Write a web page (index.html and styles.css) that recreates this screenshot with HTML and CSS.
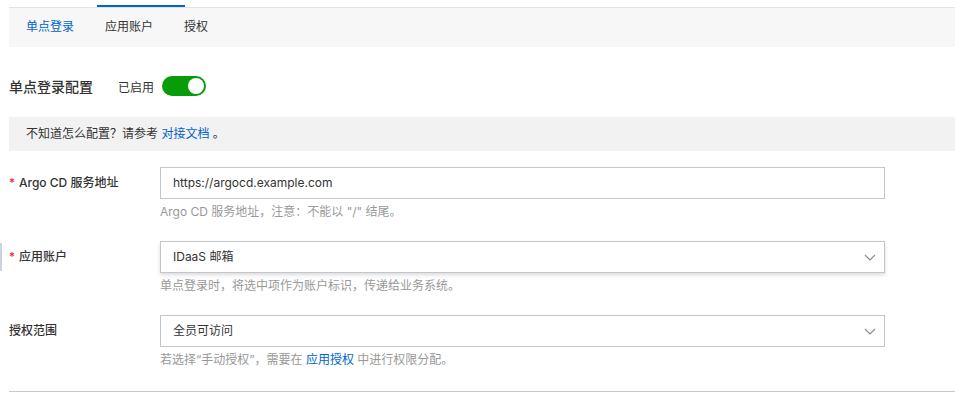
FILE: index.html
```html
<!DOCTYPE html>
<html lang="zh-CN">
<head>
<meta charset="utf-8">
<title>单点登录</title>
<link rel="stylesheet" href="styles.css">
</head>
<body>
<div class="page">
  <div class="tabs">
    <span class="tab-indicator"></span>
    <div class="tab active">单点登录</div>
    <div class="tab">应用账户</div>
    <div class="tab">授权</div>
  </div>

  <div class="header">
    <h2 class="title">单点登录配置</h2>
    <span class="status">已启用</span>
    <span class="switch"><span class="knob"></span></span>
  </div>

  <div class="notice">不知道怎么配置？请参考 <a class="link" href="#">对接文档</a> 。</div>

  <div class="form">
    <div class="row">
      <div class="label"><span class="req">*</span>Argo CD 服务地址</div>
      <div class="control">
        <div class="input">https://argocd.example.com</div>
        <div class="help">Argo CD 服务地址，注意：不能以 "/" 结尾。</div>
      </div>
    </div>
    <div class="row row-marked">
      <div class="label"><span class="req">*</span>应用账户</div>
      <div class="control">
        <div class="input select hover">IDaaS 邮箱
          <svg class="chev" width="12" height="7" viewBox="0 0 12 7"><path d="M1 1 L6 6 L11 1" fill="none" stroke="#8a8a8a" stroke-width="1.2"/></svg>
        </div>
        <div class="help">单点登录时，将选中项作为账户标识，传递给业务系统。</div>
      </div>
    </div>
    <div class="row">
      <div class="label">授权范围</div>
      <div class="control">
        <div class="input select">全员可访问
          <svg class="chev" width="12" height="7" viewBox="0 0 12 7"><path d="M1 1 L6 6 L11 1" fill="none" stroke="#8a8a8a" stroke-width="1.2"/></svg>
        </div>
        <div class="help">若选择“手动授权”，需要在 <a class="link" href="#">应用授权</a> 中进行权限分配。</div>
      </div>
    </div>
  </div>
  <div class="divider"></div>
</div>
</body>
</html>
```

FILE: styles.css
```css
* { box-sizing: border-box; }
html, body { margin: 0; padding: 0; background: #fff; }
body {
  font-family: Inter, "Noto Sans CJK SC", sans-serif;
  font-size: 12px;
  color: #333;
}
.page {
  padding: 7px 0 0 9px;
}
.tabs {
  position: relative;
  display: flex;
  height: 40px;
  border-top: 1px solid #e3e3e3;
  background: #f7f7f7;
  padding-left: 17px;
}
.tab-indicator {
  position: absolute;
  top: -3px;
  left: 88px;
  width: 88px;
  height: 2px;
  background: #0064c8;
}
.tab {
  line-height: 38px;
  margin-right: 31px;
  color: #333;
}
.tab.active { color: #0064c8; }

.header {
  display: flex;
  align-items: center;
  height: 20px;
  margin-top: 29px;
  margin-bottom: 21px;
}
.title {
  margin: 0;
  font-size: 14px;
  font-weight: 500;
  color: #333;
  margin-right: 25px;
}
.status { color: #333; margin-right: 8px; }
.switch {
  display: flex;
  align-items: center;
  justify-content: flex-end;
  width: 44px;
  height: 20px;
  border-radius: 10px;
  background: #089c08;
  padding-right: 2px;
}
.knob {
  width: 16px;
  height: 16px;
  border-radius: 50%;
  background: #fff;
}

.notice {
  height: 34px;
  line-height: 34px;
  background: #f2f2f2;
  padding-left: 17px;
  color: #333;
}
.link { color: #0064c8; text-decoration: none; }

.form { margin-top: 16px; }
.row {
  display: flex;
  margin-bottom: 20px;
  position: relative;
}
.row:last-child { margin-bottom: 0; }
.row-marked::before {
  content: "";
  position: absolute;
  left: -9px;
  top: 2px;
  width: 2px;
  height: 28px;
  background: #cdd3dc;
}
.label {
  width: 151px;
  line-height: 32px;
  font-weight: 500;
  color: #333;
}
.req {
  color: #e02020;
  display: inline-block;
  width: 10px;
  font-weight: 400;
}
.control { width: 725px; }
.input {
  position: relative;
  height: 32px;
  line-height: 30px;
  border: 1px solid #c0c6cc;
  padding-left: 12px;
  color: #333;
  background: #fff;
}
.input.hover { box-shadow: 0 2px 4px rgba(0,0,0,0.14); }
.chev {
  position: absolute;
  right: 8px;
  top: 12px;
}
.help {
  margin-top: 4px;
  line-height: 18px;
  color: #999;
}
.divider {
  margin-top: 22px;
  height: 1px;
  background: #c8c8c8;
}
```
